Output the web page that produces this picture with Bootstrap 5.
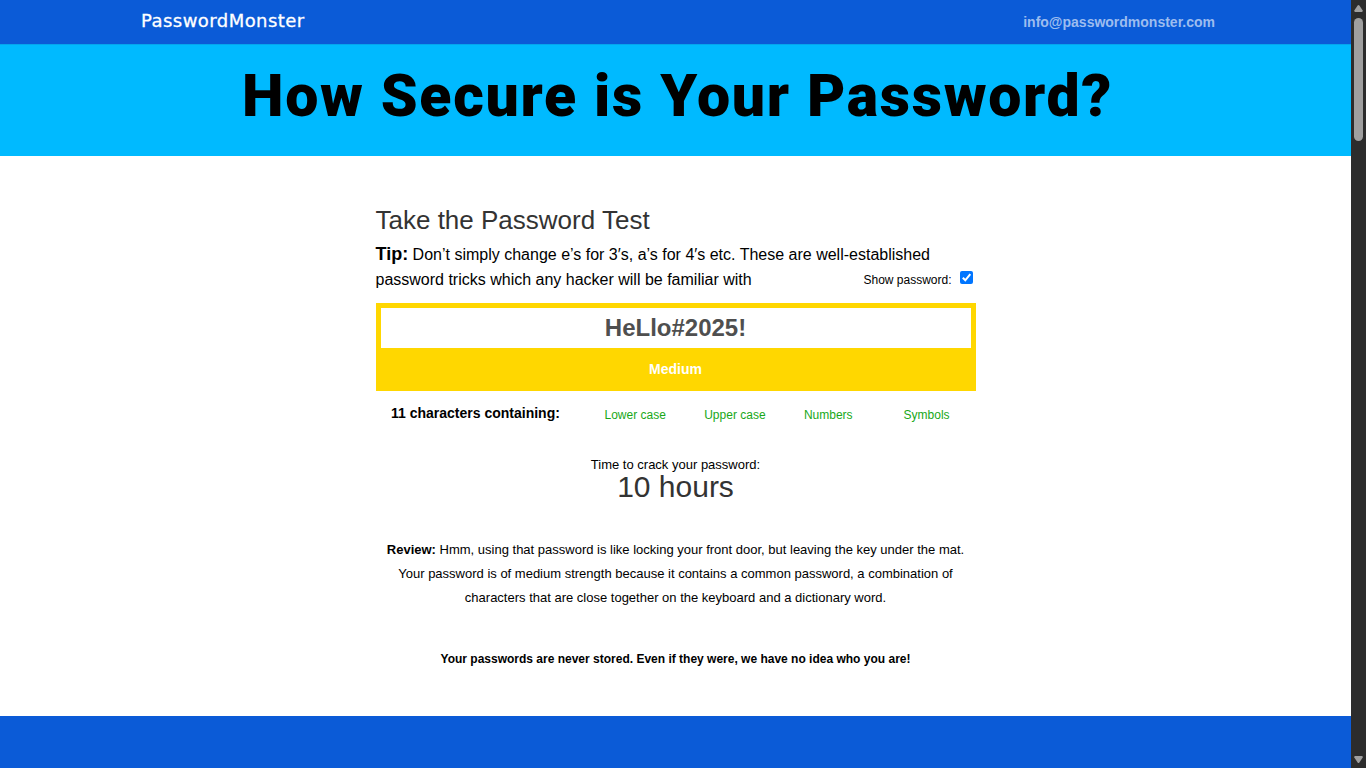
<!DOCTYPE html>
<html lang="en">
<head>
<meta charset="utf-8">
<title>PasswordMonster</title>
<meta name="viewport" content="width=device-width, initial-scale=1">
<link href="https://cdn.jsdelivr.net/npm/bootstrap@5.3.0/dist/css/bootstrap.min.css" rel="stylesheet">
<style>
  body { font-family: "Liberation Sans", Arial, sans-serif; color: #000; height: 768px; overflow: hidden; background: #fff; }
  .topbar { background: #0b5bd7; height: 44px; padding: 0 136px 0 141px; }
  .brand-text { font: 400 18px/41px "DejaVu Sans", sans-serif; letter-spacing: .45px; color: #fff; -webkit-text-stroke: .3px #fff; }
  .contact { font-size: 14px; line-height: 44px; font-weight: 700; color: #9dbdef; }
  .hero { background: #00baff; height: 112px; border-top: 1px solid #05a6ec; }
  .hero-title { font: 900 59px/101px Roboto, sans-serif; letter-spacing: 1.65px; white-space: nowrap; padding-left: 4px; }
  .tester { width: 600px; padding-top: 46px; height: 560px; }
  .test-title { font-size: 26px; line-height: 36px; color: #333; font-weight: 400; }
  .tip { font-size: 16px; line-height: 25px; margin-top: 4px; }
  .tip strong { font-size: 18px; line-height: 1; }
  .show-pass { font-size: 12px; line-height: 23px; right: 3px; bottom: 0; }
  .tick { width: 13px; height: 13px; margin: 0 0 7px 8px; }
  .meter { background: #ffd700; height: 88px; padding: 5px; margin-top: 11px; }
  .pass-input { height: 40px; border: 0; border-radius: 0; font-size: 24px; font-weight: 700; color: #4f4f4f; padding: 0; background: #fff; }
  .strength { font-size: 14px; font-weight: 700; line-height: 42px; color: #fff; }
  .contents { height: 46px; font-size: 12px; line-height: 48px; color: #18a818; }
  .contents strong { width: 229px; padding-left: 15.5px; font-size: 14px; line-height: 45px; color: #000; }
  .contents span { width: 99.7px; }
  .contents span:last-child { width: auto; }
  .crack-label { font-size: 13px; line-height: 20px; margin-top: 18px; }
  .crack-time { font-size: 30px; line-height: 36px; color: #333; margin-top: -6px; }
  .review { font-size: 13px; line-height: 24px; margin-top: 33px; }
  .promise { font-size: 12px; line-height: 20px; font-weight: 700; margin-top: 39px; }
  .bottom-band { background: #0b5bd7; }
  .scroll-rail { width: 15px; background: #2c2c2c; }
  .scroll-thumb { width: 9px; height: 123px; margin-top: 6px; border-radius: 5px; background: #9f9f9f; }
</style>
</head>
<body class="d-flex">
<div class="flex-grow-1 d-flex flex-column">
  <header class="topbar d-flex justify-content-between">
    <span class="brand-text">PasswordMonster</span>
    <span class="contact">info@passwordmonster.com</span>
  </header>
  <section class="hero text-center">
    <h1 class="hero-title m-0">How Secure is Your Password?</h1>
  </section>
  <main class="tester mx-auto flex-shrink-0">
    <h2 class="test-title mb-0">Take the Password Test</h2>
    <div class="position-relative">
      <p class="tip mb-0"><strong>Tip:</strong> Don’t simply change e’s for 3′s, a’s for 4′s etc. These are well-established password tricks which any hacker will be familiar with</p>
      <div class="show-pass position-absolute d-flex align-items-center">Show password:
        <svg class="tick" viewBox="0 0 13 13"><rect width="13" height="13" rx="2" fill="#0075ff"/><path d="M2.8 6.8 5.3 9.3 10.3 3.2" fill="none" stroke="#fff" stroke-width="2"/></svg>
      </div>
    </div>
    <div class="meter">
      <input class="pass-input w-100 text-center d-block" type="text" value="HeLlo#2025!" aria-label="Password">
      <div class="strength text-center">Medium</div>
    </div>
    <div class="contents d-flex">
      <strong class="flex-shrink-0">11 characters containing:</strong><span class="flex-shrink-0">Lower case</span><span class="flex-shrink-0">Upper case</span><span class="flex-shrink-0">Numbers</span><span>Symbols</span>
    </div>
    <div class="crack-label text-center">Time to crack your password:</div>
    <div class="crack-time text-center">10 hours</div>
    <p class="review text-center mb-0"><strong>Review:</strong> Hmm, using that password is like locking your front door, but leaving the key under the mat. Your password is of medium strength because it contains a common password, a combination of characters that are close together on the keyboard and a dictionary word.</p>
    <p class="promise text-center mb-0">Your passwords are never stored. Even if they were, we have no idea who you are!</p>
  </main>
  <footer class="bottom-band flex-grow-1"></footer>
</div>
<div class="scroll-rail d-flex flex-column align-items-center flex-shrink-0">
  <svg width="9" height="8" viewBox="0 0 9 8" class="mt-1 flex-shrink-0"><path d="M3.6 1.5Q4.5.5 5.4 1.5L8.7 6.6Q9 8 7.8 8H1.2Q0 8 .3 6.6Z" fill="#9f9f9f"/></svg>
  <div class="scroll-thumb"></div>
  <svg width="9" height="8" viewBox="0 0 9 8" class="mt-auto mb-1 flex-shrink-0"><path d="M3.6 6.5Q4.5 7.5 5.4 6.5L8.7 1.4Q9 0 7.8 0H1.2Q0 0 .3 1.4Z" fill="#9f9f9f"/></svg>
</div>
<script src="https://cdn.jsdelivr.net/npm/bootstrap@5.3.0/dist/js/bootstrap.bundle.min.js"></script>
</body>
</html>
